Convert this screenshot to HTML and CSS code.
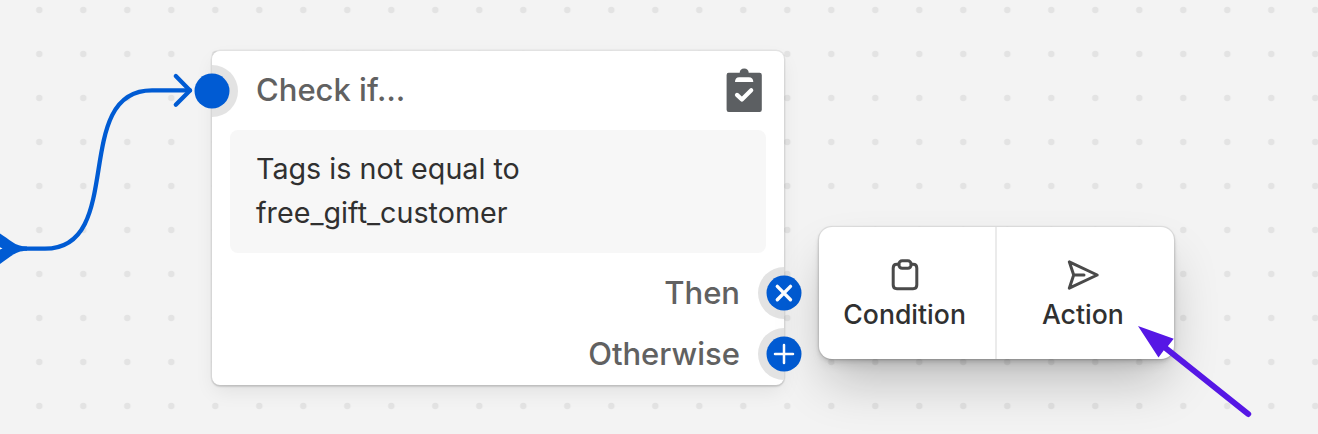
FILE: index.html
```html
<!DOCTYPE html>
<html lang="en">
<head>
<meta charset="utf-8">
<title>Workflow editor</title>
<link rel="stylesheet" href="styles.css">
</head>
<body>
<main class="canvas">
  <svg class="edge" width="240" height="434" viewBox="0 0 240 434" aria-hidden="true">
    <path class="edge-line" d="M20 248.700H45C127 248.700 70 90.400 152 90.400H190"/>
    <path class="edge-head" d="M175.800 76L190 90.400L175.800 104.700"/>
    <path class="edge-joint" d="M0 233.500C9 239 15 246.600 27 246.600V250.800C15 250.800 9 258 0 264Z"/>
    <path class="edge-gap" d="M0 247.300L2.500 248.400L0 249.500Z"/>
  </svg>

  <section class="node">
    <header class="node-header">
      <h2 class="node-title">Check if…</h2>
      <svg class="node-icon" width="36" height="44" viewBox="0 0 36 44" aria-hidden="true">
        <path fill="#5c5f62" d="M2.600 4.800H13.700C13.700 2.300 15.400 .6 18.200 .6S22.700 2.300 22.700 4.800H33.600Q35.800 4.800 35.800 7V41.800Q35.800 44 33.600 44H2.800Q.6 44 .6 41.800V7Q.6 4.800 2.600 4.800Z"/>
        <path fill="#fff" d="M9 13.900C9 10.800 10.400 9.200 13.200 9.200H22.900C25.700 9.200 27.300 10.800 27.300 13.900Z"/>
        <path fill="none" stroke="#fff" stroke-width="4.200" stroke-linecap="round" stroke-linejoin="round" d="M11 26.900L15.900 31.500L25.200 22.300"/>
      </svg>
    </header>
    <p class="rule">Tags is not equal to free_gift_customer</p>
    <div class="outputs">
      <span class="output">Then</span>
      <span class="output">Otherwise</span>
    </div>
    <i class="halo halo-in"></i>
    <i class="halo halo-then"></i>
    <i class="halo halo-else"></i>
  </section>

  <svg class="port port-in" viewBox="0 0 36 36"><circle cx="18" cy="18" r="17.500"/></svg>
  <svg class="port port-then" viewBox="0 0 36 36"><circle cx="18" cy="18" r="17.500"/><path class="port-cross" d="M11.300 11.400L24.500 24.700M24.500 11.400L11.300 24.700"/></svg>
  <svg class="port port-else" viewBox="0 0 36 36"><circle cx="18" cy="18" r="17.500"/><path class="port-plus" d="M9 18H27M18 9V27"/></svg>

  <nav class="menu">
    <button class="menu-item" type="button">
      <svg class="menu-icon" width="36" height="36" viewBox="0 0 36 36" aria-hidden="true">
        <path d="M11.900 7.300H9.900Q6.200 7.300 6.200 11V28Q6.200 31.700 9.900 31.700H26.100Q29.800 31.700 29.800 28V11Q29.800 7.300 26.100 7.300H24.100"/>
        <rect x="11.900" y="3.800" width="12.200" height="7.500" rx="3.300"/>
      </svg>
      <span>Condition</span>
    </button>
    <button class="menu-item" type="button">
      <svg class="menu-icon" width="36" height="36" viewBox="0 0 36 36" aria-hidden="true">
        <path d="M4.300 4.800L32.200 18L4.300 31.200L8.700 18ZM9 18H19"/>
      </svg>
      <span>Action</span>
    </button>
  </nav>

  <svg class="pointer" width="130" height="110" viewBox="1130 318 130 110" aria-hidden="true">
    <path class="pointer-line" d="M1163 346L1248.200 414"/>
    <path class="pointer-head" d="M1138 326L1173.700 338.700L1168 346L1164 350L1158.500 357.500Z"/>
  </svg>
</main>
</body>
</html>
```
FILE: styles.css
```css
* {
  box-sizing: border-box;
}

body {
  margin: 0;
  font-family: Inter, "Liberation Sans", sans-serif;
}

.canvas {
  position: relative;
  width: 1318px;
  height: 434px;
  overflow: hidden;
  background-color: #f3f3f3;
  background-image: radial-gradient(circle at 22px 22px, #e3e3e3 2.900px, transparent 3.700px);
  background-size: 44px 44px;
  background-position: 17.300px -12px;
}

.edge {
  position: absolute;
  left: 0;
  top: 0;
}

.edge-line,
.edge-head {
  fill: none;
  stroke: #005bd3;
  stroke-width: 4.300;
  stroke-linecap: round;
  stroke-linejoin: round;
}

.edge-joint {
  fill: #005bd3;
}

.edge-gap {
  fill: #fff;
}

.node {
  position: absolute;
  left: 212px;
  top: 51px;
  display: flex;
  flex-direction: column;
  width: 572px;
  height: 334px;
  padding: 0 18px;
  border-radius: 8px;
  background: #fff;
  box-shadow: 0 0 0 1.500px rgba(0, 0, 0, 0.060), 0 2px 2px rgba(0, 0, 0, 0.110), 0 8px 20px -2px rgba(0, 0, 0, 0.080);
}

.node-header {
  display: flex;
  align-items: center;
  justify-content: space-between;
  height: 79px;
  padding: 0 4px 2px 26px;
}

.node-title {
  margin: 0;
  color: #616161;
  font-size: 31px;
  font-weight: 500;
  line-height: 40px;
}

.rule {
  height: 122.500px;
  margin: 0;
  padding: 17px 200px 16px 26px;
  border-radius: 8px;
  background: #f7f7f7;
  color: #303030;
  font-size: 28.700px;
  line-height: 44px;
}

.outputs {
  display: flex;
  flex-direction: column;
  align-items: flex-end;
  padding: 9px 26px 0 0;
}

.output {
  color: #616161;
  font-size: 31px;
  font-weight: 500;
  line-height: 61px;
}

.halo {
  position: absolute;
  width: 26px;
  height: 52px;
  background: #e3e3e3;
}

.halo-in {
  left: 0;
  top: 13.500px;
  border-radius: 0 26px 26px 0;
}

.halo-then,
.halo-else {
  right: 0;
  border-radius: 26px 0 0 26px;
}

.halo-then {
  top: 215.500px;
}

.halo-else {
  top: 277px;
}

.port {
  position: absolute;
  width: 36px;
  height: 36px;
  fill: #005bd3;
}

.port-in {
  left: 194px;
  top: 72.500px;
}

.port-then {
  left: 766px;
  top: 274.500px;
}

.port-else {
  left: 766px;
  top: 336.400px;
}

.port-cross,
.port-plus {
  stroke: #fff;
  stroke-linecap: round;
}

.port-cross {
  stroke-width: 3.400;
}

.port-plus {
  stroke-width: 2.500;
}

.menu {
  position: absolute;
  left: 819px;
  top: 227px;
  display: flex;
  width: 354.500px;
  height: 131.500px;
  border-radius: 13px;
  background: #fff;
  box-shadow: 0 0 0 1.300px rgba(0, 0, 0, 0.070), 0 2px 4px rgba(0, 0, 0, 0.140), 0 8px 12px -4px rgba(0, 0, 0, 0.130), 0 28px 52px -8px rgba(0, 0, 0, 0.240);
}

.menu-item {
  display: flex;
  flex: 1;
  flex-direction: column;
  align-items: center;
  padding: 30px 5px 0 0;
  border: 0;
  background: none;
  color: #303030;
  font: 500 26.600px/36px Inter, "Liberation Sans", sans-serif;
}

.menu-item + .menu-item {
  border-left: 2px solid #ebebeb;
}

.menu-item span {
  margin-top: 3px;
}

.menu-icon {
  fill: none;
  stroke: #4a4a4a;
  stroke-width: 3;
  stroke-linecap: round;
  stroke-linejoin: round;
}

.pointer {
  position: absolute;
  left: 1130px;
  top: 318px;
}

.pointer-line {
  fill: none;
  stroke: #5617e5;
  stroke-width: 6;
  stroke-linecap: round;
}

.pointer-head {
  fill: #5617e5;
}
```
